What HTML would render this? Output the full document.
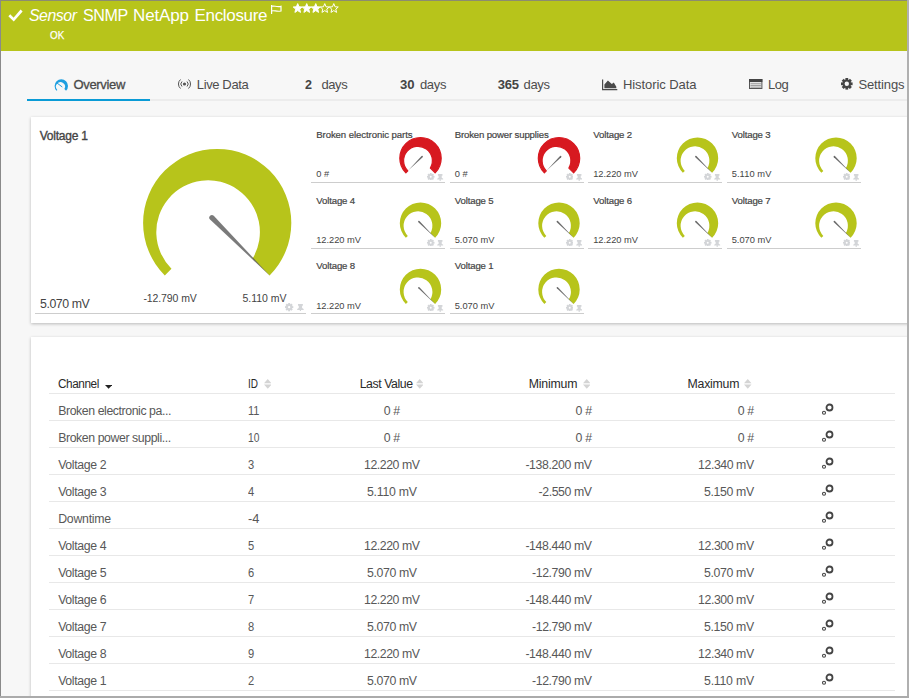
<!DOCTYPE html>
<html><head><meta charset="utf-8"><title>Sensor</title>
<style>
html,body{margin:0;padding:0}
body{width:909px;height:698px;overflow:hidden;position:relative;background:#f7f7f7;font-family:"Liberation Sans",sans-serif;color:#4a4a4a}
.a{position:absolute;white-space:nowrap;line-height:1;display:block}
#hdr{position:absolute;left:0;top:0;width:909px;height:51px;background:#b7c41b}
.card{position:absolute;background:#fff;box-shadow:0 1px 3px rgba(0,0,0,.25)}
.ln{position:absolute;height:1px;background:#e8e8e8}
.gln{position:absolute;height:1px;background:#cdcdcd}
.m{-webkit-text-stroke:.35px currentColor}
</style></head><body>
<div id="hdr"></div>

<svg class="a" style="left:8px;top:9px" width="16" height="13" viewBox="0 0 16 13"><path d="M1.3 6.200L5.700 10.600L13.600 1.500" fill="none" stroke="#fff" stroke-width="2.700"/></svg>
<div class="a" style="transform:scaleX(0.959);transform-origin:0 0;left:29.3px;top:7px;font-size:16.5px;color:#fff;font-style:italic;letter-spacing:-0.45px">Sensor</div>
<div class="a" style="transform:scaleX(0.946);transform-origin:0 0;left:82.5px;top:7px;font-size:17px;color:#fff;;letter-spacing:-0.45px">SNMP</div>
<div class="a" style="left:133px;top:7px;font-size:17px;color:#fff;;letter-spacing:-0.141px">NetApp</div>
<div class="a" style="left:194.5px;top:7px;font-size:17px;color:#fff;;letter-spacing:-0.326px">Enclosure</div>
<div class="a" style="transform:scaleX(0.87);transform-origin:0 0;left:49.7px;top:30px;font-size:11.3px;color:#fff;-webkit-text-stroke:.25px #fff">OK</div>
<svg class="a" style="left:271px;top:5px" width="11" height="10" viewBox="0 0 11 10"><path d="M.6 0V9M.6 1.300C3 .3 5.500 2.300 10 1.300V6C5.500 7 3 5 .6 6" fill="none" stroke="#fff" stroke-width="1.2"/></svg>
<svg class="a" style="left:0;top:0" width="350" height="20"><path transform="translate(293.2 3.6)" d="M4.500 0L5.800 3.200L9 3.400L6.500 5.500L7.300 8.800L4.500 7L1.700 8.800L2.500 5.500L0 3.400L3.200 3.200Z" fill="#fff" stroke="#fff" stroke-width="1"/><path transform="translate(302.22 3.6)" d="M4.500 0L5.800 3.200L9 3.400L6.500 5.500L7.300 8.800L4.500 7L1.700 8.800L2.500 5.500L0 3.400L3.200 3.200Z" fill="#fff" stroke="#fff" stroke-width="1"/><path transform="translate(311.24 3.6)" d="M4.500 0L5.800 3.200L9 3.400L6.500 5.500L7.300 8.800L4.500 7L1.700 8.800L2.500 5.500L0 3.400L3.200 3.200Z" fill="#fff" stroke="#fff" stroke-width="1"/><path transform="translate(320.26 3.6)" d="M4.500 0L5.800 3.200L9 3.400L6.500 5.500L7.300 8.800L4.500 7L1.700 8.800L2.500 5.500L0 3.400L3.200 3.200Z" fill="none" stroke="#fff" stroke-width="1"/><path transform="translate(329.28 3.6)" d="M4.500 0L5.800 3.200L9 3.400L6.500 5.500L7.300 8.800L4.500 7L1.700 8.800L2.500 5.500L0 3.400L3.200 3.200Z" fill="none" stroke="#fff" stroke-width="1"/></svg>
<div class="a" style="left:73.4px;top:78px;font-size:13px;color:#4a4a4a;-webkit-text-stroke:.3px #4a4a4a;letter-spacing:-0.312px">Overview</div>
<div class="a" style="left:196.8px;top:78px;font-size:13px;color:#4d4d4d;;letter-spacing:-0.378px">Live Data</div>
<div class="a" style="transform:scaleX(0.968);transform-origin:0 0;left:305px;top:78px;font-size:13px;color:#444;font-weight:bold">2</div>
<div class="a" style="left:321.4px;top:78px;font-size:13px;color:#4d4d4d;;letter-spacing:-0.39px">days</div>
<div class="a" style="transform:scaleX(1.009);transform-origin:0 0;left:400px;top:78px;font-size:13px;color:#444;font-weight:bold">30</div>
<div class="a" style="left:420px;top:78px;font-size:13px;color:#4d4d4d;;letter-spacing:-0.356px">days</div>
<div class="a" style="left:497.7px;top:78px;font-size:13px;color:#444;font-weight:bold;letter-spacing:-0.152px">365</div>
<div class="a" style="left:523.6px;top:78px;font-size:13px;color:#4d4d4d;;letter-spacing:-0.356px">days</div>
<div class="a" style="left:623px;top:78px;font-size:13px;color:#4d4d4d;;letter-spacing:-0.077px">Historic Data</div>
<div class="a" style="left:767.9px;top:78px;font-size:13px;color:#4d4d4d;;letter-spacing:-0.45px">Log</div>
<div class="a" style="left:858.4px;top:78px;font-size:13px;color:#4d4d4d;;letter-spacing:-0.126px">Settings</div>
<div class="a" style="left:27px;top:99px;width:882px;height:2px;background:#ececec"></div>
<div class="a" style="left:27px;top:99px;width:123px;height:2px;background:#0a9bd6"></div>
<svg class="a" style="left:0;top:0" width="80" height="95"><path d="M56.562 90.638A6.7 6.7 0 1 1 66.038 90.638L64.38 88.98A4.5 4.5 0 1 0 57.318 89.882Z" fill="#1e9fe0"/><path d="M57 83L62.300 87" stroke="#1e9fe0" stroke-width="1"/></svg>
<svg class="a" style="left:177px;top:78px" width="15" height="12" viewBox="0 0 15 12"><g fill="none" stroke="#555" stroke-width="1"><path d="M5 3.500A3.500 3.500 0 0 0 5 8.500M10 3.500A3.500 3.500 0 0 1 10 8.500M3.500 1.500A6 6 0 0 0 3.500 10.500M11.500 1.500A6 6 0 0 1 11.500 10.500"/></g><circle cx="7.500" cy="6" r="1.600" fill="#555"/></svg>
<svg class="a" style="left:602px;top:78.500px" width="16" height="12" viewBox="0 0 16 12"><path d="M.6 .4V10.700H15.300" fill="none" stroke="#4a4a4a" stroke-width="1.200"/><path d="M2.400 9.300V5.400L5.900 1.400L9.800 4.900L11.800 3.400L14.300 7.800V9.300Z" fill="#4a4a4a"/></svg>
<svg class="a" style="left:749.400px;top:78.900px" width="13.400" height="10" viewBox="0 0 13.400 10"><rect x=".5" y=".5" width="12.400" height="9" fill="#e4e4e4" stroke="#555" stroke-width="1"/><rect x="0" y="0" width="13.400" height="3" fill="#444"/><path d="M1.500 4.700H11.900M1.500 6.500H11.900M1.500 8.200H11.900" stroke="#999" stroke-width=".9"/></svg>
<svg class="a" style="left:841px;top:78.3px" width="11.6" height="11.6" viewBox="0 0 11.6 11.6"><g fill="#444"><rect x="4.408" y="0" width="2.784" height="11.6" transform="rotate(0 5.8 5.8)"/><rect x="4.408" y="0" width="2.784" height="11.6" transform="rotate(45 5.8 5.8)"/><rect x="4.408" y="0" width="2.784" height="11.6" transform="rotate(90 5.8 5.8)"/><rect x="4.408" y="0" width="2.784" height="11.6" transform="rotate(135 5.8 5.8)"/><circle cx="5.8" cy="5.8" r="4.292"/></g><circle cx="5.8" cy="5.8" r="2.204" fill="#f7f7f7"/></svg>
<div class="card" style="left:31px;top:117px;width:890px;height:206px"></div>
<div class="a" style="left:39.7px;top:130px;font-size:12px;color:#444;-webkit-text-stroke:.35px #444;letter-spacing:-0.218px">Voltage 1</div>
<div class="a" style="transform:scaleX(0.987);transform-origin:0 0;left:40px;top:298px;font-size:12.5px;color:#444;;letter-spacing:-0.45px">5.070 mV</div>
<div class="a" style="left:143.4px;top:293px;font-size:10.5px;color:#444;;letter-spacing:-0.098px">-12.790 mV</div>
<div class="a" style="left:242.4px;top:293px;font-size:10.5px;color:#444;;letter-spacing:0px">5.110 mV</div>
<div class="gln" style="left:35px;top:313px;width:271px"></div>
<svg class="a" style="left:285.4px;top:303.3px" width="8.3" height="8.3" viewBox="0 0 8.3 8.3"><g fill="#d3d5d8"><rect x="3.154" y="0" width="1.992" height="8.3" transform="rotate(0 4.15 4.15)"/><rect x="3.154" y="0" width="1.992" height="8.3" transform="rotate(45 4.15 4.15)"/><rect x="3.154" y="0" width="1.992" height="8.3" transform="rotate(90 4.15 4.15)"/><rect x="3.154" y="0" width="1.992" height="8.3" transform="rotate(135 4.15 4.15)"/><circle cx="4.15" cy="4.15" r="3.071"/></g><circle cx="4.15" cy="4.15" r="1.162" fill="#fff"/></svg>
<svg class="a" style="left:297.3px;top:303.5px" width="6.86" height="7.84" viewBox="0 0 7 8"><path d="M1 0H6V1.900H5.200V4L6.800 5.200V6.100H4.100V8H2.900V6.100H.2V5.200L1.800 4V1.900H1Z" fill="#d3d5d8"/></svg>
<svg class="a" style="left:0;top:0" width="909" height="340"><path d="M164.803 275.397A74.1 74.1 0 1 1 269.597 275.397L252.68 258.48A51.8 51.8 0 1 0 171.472 268.728Z" fill="#b7c41b"/><path d="M210.058 219.535L270.374 276.174L213.735 215.858A2.6 2.6 0 0 0 210.058 219.535Z" fill="rgba(80,80,80,.76)"/>
<path d="M405.863 172.837A20.7 20.7 0 1 1 435.137 172.837L430.371 168.071A14.4 14.4 0 1 0 407.818 170.882Z" fill="#d71920" stroke="#d71920" stroke-width="1.2" stroke-linejoin="round"/>
<path d="M421.561 156.008L408.126 170.574L422.692 157.139A0.8 0.8 0 0 0 421.561 156.008Z" fill="rgba(70,70,70,.8)"/>
<path d="M544.363 172.837A20.7 20.7 0 1 1 573.637 172.837L568.871 168.071A14.4 14.4 0 1 0 546.318 170.882Z" fill="#d71920" stroke="#d71920" stroke-width="1.2" stroke-linejoin="round"/>
<path d="M560.061 156.008L546.626 170.574L561.192 157.139A0.8 0.8 0 0 0 560.061 156.008Z" fill="rgba(70,70,70,.8)"/>
<path d="M682.863 172.837A20.7 20.7 0 1 1 712.137 172.837L707.371 168.071A14.4 14.4 0 1 0 684.818 170.882Z" fill="#b7c41b"/>
<path d="M695.308 157.139L712.349 173.049L696.439 156.008A0.8 0.8 0 0 0 695.308 157.139Z" fill="rgba(70,70,70,.8)"/>
<path d="M821.363 172.837A20.7 20.7 0 1 1 850.637 172.837L845.871 168.071A14.4 14.4 0 1 0 823.318 170.882Z" fill="#b7c41b"/>
<path d="M833.808 157.139L850.849 173.049L834.939 156.008A0.8 0.8 0 0 0 833.808 157.139Z" fill="rgba(70,70,70,.8)"/>
<path d="M405.863 237.837A20.7 20.7 0 1 1 435.137 237.837L430.371 233.071A14.4 14.4 0 1 0 407.818 235.882Z" fill="#b7c41b"/>
<path d="M418.308 222.139L435.349 238.049L419.439 221.008A0.8 0.8 0 0 0 418.308 222.139Z" fill="rgba(70,70,70,.8)"/>
<path d="M544.363 237.837A20.7 20.7 0 1 1 573.637 237.837L568.871 233.071A14.4 14.4 0 1 0 546.318 235.882Z" fill="#b7c41b"/>
<path d="M556.808 222.139L573.849 238.049L557.939 221.008A0.8 0.8 0 0 0 556.808 222.139Z" fill="rgba(70,70,70,.8)"/>
<path d="M682.863 237.837A20.7 20.7 0 1 1 712.137 237.837L707.371 233.071A14.4 14.4 0 1 0 684.818 235.882Z" fill="#b7c41b"/>
<path d="M695.308 222.139L712.349 238.049L696.439 221.008A0.8 0.8 0 0 0 695.308 222.139Z" fill="rgba(70,70,70,.8)"/>
<path d="M821.363 237.837A20.7 20.7 0 1 1 850.637 237.837L845.871 233.071A14.4 14.4 0 1 0 823.318 235.882Z" fill="#b7c41b"/>
<path d="M833.808 222.139L850.849 238.049L834.939 221.008A0.8 0.8 0 0 0 833.808 222.139Z" fill="rgba(70,70,70,.8)"/>
<path d="M405.863 304.037A20.7 20.7 0 1 1 435.137 304.037L430.371 299.271A14.4 14.4 0 1 0 407.818 302.082Z" fill="#b7c41b"/>
<path d="M418.308 288.339L435.349 304.249L419.439 287.208A0.8 0.8 0 0 0 418.308 288.339Z" fill="rgba(70,70,70,.8)"/>
<path d="M544.363 304.037A20.7 20.7 0 1 1 573.637 304.037L568.871 299.271A14.4 14.4 0 1 0 546.318 302.082Z" fill="#b7c41b"/>
<path d="M556.808 288.339L573.849 304.249L557.939 287.208A0.8 0.8 0 0 0 556.808 288.339Z" fill="rgba(70,70,70,.8)"/>
</svg>
<div class="a" style="left:316.2px;top:130px;font-size:9.6px;color:#444;-webkit-text-stroke:.2px #444;letter-spacing:-0.078px">Broken electronic parts</div>
<div class="a" style="left:316.2px;top:170px;font-size:9.3px;color:#444;;letter-spacing:0.081px">0 #</div>
<div class="gln" style="left:311.2px;top:182px;width:134px"></div>
<svg class="a" style="left:427.1px;top:172.9px" width="7.5" height="7.5" viewBox="0 0 7.5 7.5"><g fill="#d3d5d8"><rect x="2.85" y="0" width="1.8" height="7.5" transform="rotate(0 3.75 3.75)"/><rect x="2.85" y="0" width="1.8" height="7.5" transform="rotate(45 3.75 3.75)"/><rect x="2.85" y="0" width="1.8" height="7.5" transform="rotate(90 3.75 3.75)"/><rect x="2.85" y="0" width="1.8" height="7.5" transform="rotate(135 3.75 3.75)"/><circle cx="3.75" cy="3.75" r="2.775"/></g><circle cx="3.75" cy="3.75" r="0.975" fill="#fff"/></svg>
<svg class="a" style="left:437.4px;top:173.6px" width="6.37" height="7.28" viewBox="0 0 7 8"><path d="M1 0H6V1.900H5.200V4L6.800 5.200V6.100H4.100V8H2.900V6.100H.2V5.200L1.800 4V1.900H1Z" fill="#d3d5d8"/></svg>
<div class="a" style="left:454.7px;top:130px;font-size:9.6px;color:#444;-webkit-text-stroke:.2px #444;letter-spacing:-0.153px">Broken power supplies</div>
<div class="a" style="left:454.7px;top:170px;font-size:9.3px;color:#444;;letter-spacing:0.081px">0 #</div>
<div class="gln" style="left:449.7px;top:182px;width:134px"></div>
<svg class="a" style="left:565.6px;top:172.9px" width="7.5" height="7.5" viewBox="0 0 7.5 7.5"><g fill="#d3d5d8"><rect x="2.85" y="0" width="1.8" height="7.5" transform="rotate(0 3.75 3.75)"/><rect x="2.85" y="0" width="1.8" height="7.5" transform="rotate(45 3.75 3.75)"/><rect x="2.85" y="0" width="1.8" height="7.5" transform="rotate(90 3.75 3.75)"/><rect x="2.85" y="0" width="1.8" height="7.5" transform="rotate(135 3.75 3.75)"/><circle cx="3.75" cy="3.75" r="2.775"/></g><circle cx="3.75" cy="3.75" r="0.975" fill="#fff"/></svg>
<svg class="a" style="left:575.9px;top:173.6px" width="6.37" height="7.28" viewBox="0 0 7 8"><path d="M1 0H6V1.900H5.200V4L6.800 5.200V6.100H4.100V8H2.900V6.100H.2V5.200L1.800 4V1.900H1Z" fill="#d3d5d8"/></svg>
<div class="a" style="left:593.2px;top:130px;font-size:9.6px;color:#444;-webkit-text-stroke:.2px #444;letter-spacing:-0.127px">Voltage 2</div>
<div class="a" style="left:593.2px;top:170px;font-size:9.3px;color:#444;;letter-spacing:-0.021px">12.220 mV</div>
<div class="gln" style="left:588.2px;top:182px;width:134px"></div>
<svg class="a" style="left:704.1px;top:172.9px" width="7.5" height="7.5" viewBox="0 0 7.5 7.5"><g fill="#d3d5d8"><rect x="2.85" y="0" width="1.8" height="7.5" transform="rotate(0 3.75 3.75)"/><rect x="2.85" y="0" width="1.8" height="7.5" transform="rotate(45 3.75 3.75)"/><rect x="2.85" y="0" width="1.8" height="7.5" transform="rotate(90 3.75 3.75)"/><rect x="2.85" y="0" width="1.8" height="7.5" transform="rotate(135 3.75 3.75)"/><circle cx="3.75" cy="3.75" r="2.775"/></g><circle cx="3.75" cy="3.75" r="0.975" fill="#fff"/></svg>
<svg class="a" style="left:714.4px;top:173.6px" width="6.37" height="7.28" viewBox="0 0 7 8"><path d="M1 0H6V1.900H5.200V4L6.800 5.200V6.100H4.100V8H2.900V6.100H.2V5.200L1.800 4V1.900H1Z" fill="#d3d5d8"/></svg>
<div class="a" style="left:731.7px;top:130px;font-size:9.6px;color:#444;-webkit-text-stroke:.2px #444;letter-spacing:-0.127px">Voltage 3</div>
<div class="a" style="left:731.7px;top:170px;font-size:9.3px;color:#444;;letter-spacing:0.084px">5.110 mV</div>
<div class="gln" style="left:726.7px;top:182px;width:134px"></div>
<svg class="a" style="left:842.6px;top:172.9px" width="7.5" height="7.5" viewBox="0 0 7.5 7.5"><g fill="#d3d5d8"><rect x="2.85" y="0" width="1.8" height="7.5" transform="rotate(0 3.75 3.75)"/><rect x="2.85" y="0" width="1.8" height="7.5" transform="rotate(45 3.75 3.75)"/><rect x="2.85" y="0" width="1.8" height="7.5" transform="rotate(90 3.75 3.75)"/><rect x="2.85" y="0" width="1.8" height="7.5" transform="rotate(135 3.75 3.75)"/><circle cx="3.75" cy="3.75" r="2.775"/></g><circle cx="3.75" cy="3.75" r="0.975" fill="#fff"/></svg>
<svg class="a" style="left:852.9px;top:173.6px" width="6.37" height="7.28" viewBox="0 0 7 8"><path d="M1 0H6V1.900H5.200V4L6.800 5.200V6.100H4.100V8H2.900V6.100H.2V5.200L1.800 4V1.900H1Z" fill="#d3d5d8"/></svg>
<div class="a" style="left:316.2px;top:196px;font-size:9.6px;color:#444;-webkit-text-stroke:.2px #444;letter-spacing:-0.127px">Voltage 4</div>
<div class="a" style="left:316.2px;top:236px;font-size:9.3px;color:#444;;letter-spacing:-0.021px">12.220 mV</div>
<div class="gln" style="left:311.2px;top:248px;width:134px"></div>
<svg class="a" style="left:427.1px;top:238.9px" width="7.5" height="7.5" viewBox="0 0 7.5 7.5"><g fill="#d3d5d8"><rect x="2.85" y="0" width="1.8" height="7.5" transform="rotate(0 3.75 3.75)"/><rect x="2.85" y="0" width="1.8" height="7.5" transform="rotate(45 3.75 3.75)"/><rect x="2.85" y="0" width="1.8" height="7.5" transform="rotate(90 3.75 3.75)"/><rect x="2.85" y="0" width="1.8" height="7.5" transform="rotate(135 3.75 3.75)"/><circle cx="3.75" cy="3.75" r="2.775"/></g><circle cx="3.75" cy="3.75" r="0.975" fill="#fff"/></svg>
<svg class="a" style="left:437.4px;top:239.6px" width="6.37" height="7.28" viewBox="0 0 7 8"><path d="M1 0H6V1.900H5.200V4L6.800 5.200V6.100H4.100V8H2.900V6.100H.2V5.200L1.800 4V1.900H1Z" fill="#d3d5d8"/></svg>
<div class="a" style="left:454.7px;top:196px;font-size:9.6px;color:#444;-webkit-text-stroke:.2px #444;letter-spacing:-0.127px">Voltage 5</div>
<div class="a" style="left:454.7px;top:236px;font-size:9.3px;color:#444;;letter-spacing:-0.014px">5.070 mV</div>
<div class="gln" style="left:449.7px;top:248px;width:134px"></div>
<svg class="a" style="left:565.6px;top:238.9px" width="7.5" height="7.5" viewBox="0 0 7.5 7.5"><g fill="#d3d5d8"><rect x="2.85" y="0" width="1.8" height="7.5" transform="rotate(0 3.75 3.75)"/><rect x="2.85" y="0" width="1.8" height="7.5" transform="rotate(45 3.75 3.75)"/><rect x="2.85" y="0" width="1.8" height="7.5" transform="rotate(90 3.75 3.75)"/><rect x="2.85" y="0" width="1.8" height="7.5" transform="rotate(135 3.75 3.75)"/><circle cx="3.75" cy="3.75" r="2.775"/></g><circle cx="3.75" cy="3.75" r="0.975" fill="#fff"/></svg>
<svg class="a" style="left:575.9px;top:239.6px" width="6.37" height="7.28" viewBox="0 0 7 8"><path d="M1 0H6V1.900H5.200V4L6.800 5.200V6.100H4.100V8H2.900V6.100H.2V5.200L1.800 4V1.900H1Z" fill="#d3d5d8"/></svg>
<div class="a" style="left:593.2px;top:196px;font-size:9.6px;color:#444;-webkit-text-stroke:.2px #444;letter-spacing:-0.127px">Voltage 6</div>
<div class="a" style="left:593.2px;top:236px;font-size:9.3px;color:#444;;letter-spacing:-0.021px">12.220 mV</div>
<div class="gln" style="left:588.2px;top:248px;width:134px"></div>
<svg class="a" style="left:704.1px;top:238.9px" width="7.5" height="7.5" viewBox="0 0 7.5 7.5"><g fill="#d3d5d8"><rect x="2.85" y="0" width="1.8" height="7.5" transform="rotate(0 3.75 3.75)"/><rect x="2.85" y="0" width="1.8" height="7.5" transform="rotate(45 3.75 3.75)"/><rect x="2.85" y="0" width="1.8" height="7.5" transform="rotate(90 3.75 3.75)"/><rect x="2.85" y="0" width="1.8" height="7.5" transform="rotate(135 3.75 3.75)"/><circle cx="3.75" cy="3.75" r="2.775"/></g><circle cx="3.75" cy="3.75" r="0.975" fill="#fff"/></svg>
<svg class="a" style="left:714.4px;top:239.6px" width="6.37" height="7.28" viewBox="0 0 7 8"><path d="M1 0H6V1.900H5.200V4L6.800 5.200V6.100H4.100V8H2.900V6.100H.2V5.200L1.800 4V1.900H1Z" fill="#d3d5d8"/></svg>
<div class="a" style="left:731.7px;top:196px;font-size:9.6px;color:#444;-webkit-text-stroke:.2px #444;letter-spacing:-0.127px">Voltage 7</div>
<div class="a" style="left:731.7px;top:236px;font-size:9.3px;color:#444;;letter-spacing:-0.014px">5.070 mV</div>
<div class="gln" style="left:726.7px;top:248px;width:134px"></div>
<svg class="a" style="left:842.6px;top:238.9px" width="7.5" height="7.5" viewBox="0 0 7.5 7.5"><g fill="#d3d5d8"><rect x="2.85" y="0" width="1.8" height="7.5" transform="rotate(0 3.75 3.75)"/><rect x="2.85" y="0" width="1.8" height="7.5" transform="rotate(45 3.75 3.75)"/><rect x="2.85" y="0" width="1.8" height="7.5" transform="rotate(90 3.75 3.75)"/><rect x="2.85" y="0" width="1.8" height="7.5" transform="rotate(135 3.75 3.75)"/><circle cx="3.75" cy="3.75" r="2.775"/></g><circle cx="3.75" cy="3.75" r="0.975" fill="#fff"/></svg>
<svg class="a" style="left:852.9px;top:239.6px" width="6.37" height="7.28" viewBox="0 0 7 8"><path d="M1 0H6V1.900H5.200V4L6.800 5.200V6.100H4.100V8H2.900V6.100H.2V5.200L1.800 4V1.900H1Z" fill="#d3d5d8"/></svg>
<div class="a" style="left:316.2px;top:261px;font-size:9.6px;color:#444;-webkit-text-stroke:.2px #444;letter-spacing:-0.127px">Voltage 8</div>
<div class="a" style="left:316.2px;top:302px;font-size:9.3px;color:#444;;letter-spacing:-0.021px">12.220 mV</div>
<div class="gln" style="left:311.2px;top:313px;width:134px"></div>
<svg class="a" style="left:427.1px;top:303.9px" width="7.5" height="7.5" viewBox="0 0 7.5 7.5"><g fill="#d3d5d8"><rect x="2.85" y="0" width="1.8" height="7.5" transform="rotate(0 3.75 3.75)"/><rect x="2.85" y="0" width="1.8" height="7.5" transform="rotate(45 3.75 3.75)"/><rect x="2.85" y="0" width="1.8" height="7.5" transform="rotate(90 3.75 3.75)"/><rect x="2.85" y="0" width="1.8" height="7.5" transform="rotate(135 3.75 3.75)"/><circle cx="3.75" cy="3.75" r="2.775"/></g><circle cx="3.75" cy="3.75" r="0.975" fill="#fff"/></svg>
<svg class="a" style="left:437.4px;top:304.6px" width="6.37" height="7.28" viewBox="0 0 7 8"><path d="M1 0H6V1.900H5.200V4L6.800 5.200V6.100H4.100V8H2.900V6.100H.2V5.200L1.800 4V1.900H1Z" fill="#d3d5d8"/></svg>
<div class="a" style="left:454.7px;top:261px;font-size:9.6px;color:#444;-webkit-text-stroke:.2px #444;letter-spacing:-0.127px">Voltage 1</div>
<div class="a" style="left:454.7px;top:302px;font-size:9.3px;color:#444;;letter-spacing:-0.014px">5.070 mV</div>
<div class="gln" style="left:449.7px;top:313px;width:134px"></div>
<svg class="a" style="left:565.6px;top:303.9px" width="7.5" height="7.5" viewBox="0 0 7.5 7.5"><g fill="#d3d5d8"><rect x="2.85" y="0" width="1.8" height="7.5" transform="rotate(0 3.75 3.75)"/><rect x="2.85" y="0" width="1.8" height="7.5" transform="rotate(45 3.75 3.75)"/><rect x="2.85" y="0" width="1.8" height="7.5" transform="rotate(90 3.75 3.75)"/><rect x="2.85" y="0" width="1.8" height="7.5" transform="rotate(135 3.75 3.75)"/><circle cx="3.75" cy="3.75" r="2.775"/></g><circle cx="3.75" cy="3.75" r="0.975" fill="#fff"/></svg>
<svg class="a" style="left:575.9px;top:304.6px" width="6.37" height="7.28" viewBox="0 0 7 8"><path d="M1 0H6V1.900H5.200V4L6.800 5.200V6.100H4.100V8H2.900V6.100H.2V5.200L1.800 4V1.900H1Z" fill="#d3d5d8"/></svg>
<div class="card" style="left:31px;top:337px;width:890px;height:380px"></div>
<div class="a" style="transform:scaleX(0.958);transform-origin:0 0;left:58.2px;top:378px;font-size:12.3px;color:#2a2a2a;;letter-spacing:-0.45px">Channel</div>
<div class="a" style="transform:scaleX(0.812);transform-origin:0 0;left:248.4px;top:378px;font-size:12.3px;color:#2a2a2a;">ID</div>
<div class="a" style="left:359.7px;top:378px;font-size:12.3px;color:#2a2a2a;;letter-spacing:-0.423px">Last Value</div>
<div class="a" style="left:528.8px;top:378px;font-size:12.3px;color:#2a2a2a;;letter-spacing:-0.212px">Minimum</div>
<div class="a" style="left:687.6px;top:378px;font-size:12.3px;color:#2a2a2a;;letter-spacing:-0.249px">Maximum</div>
<div class="ln" style="left:49px;top:393px;width:846px"></div>
<div class="ln" style="left:49px;top:420px;width:846px"></div>
<div class="ln" style="left:49px;top:447px;width:846px"></div>
<div class="ln" style="left:49px;top:474px;width:846px"></div>
<div class="ln" style="left:49px;top:501px;width:846px"></div>
<div class="ln" style="left:49px;top:528px;width:846px"></div>
<div class="ln" style="left:49px;top:555px;width:846px"></div>
<div class="ln" style="left:49px;top:582px;width:846px"></div>
<div class="ln" style="left:49px;top:609px;width:846px"></div>
<div class="ln" style="left:49px;top:636px;width:846px"></div>
<div class="ln" style="left:49px;top:663px;width:846px"></div>
<div class="ln" style="left:49px;top:690px;width:846px"></div>
<div class="a" style="left:58.2px;top:405px;font-size:12.3px;color:#585858;;letter-spacing:-0.416px">Broken electronic pa...</div>
<div class="a" style="transform:scaleX(0.893);transform-origin:0 0;left:248.4px;top:405px;font-size:12.3px;color:#585858;">11</div>
<div class="a" style="left:383.8px;top:405px;font-size:12.3px;color:#585858;;letter-spacing:-0.355px">0 #</div>
<div class="a" style="left:575.6px;top:405px;font-size:12.3px;color:#585858;;letter-spacing:-0.355px">0 #</div>
<div class="a" style="left:737.7px;top:405px;font-size:12.3px;color:#585858;;letter-spacing:-0.355px">0 #</div>
<svg class="a" style="left:821px;top:403.3px" width="14" height="14" viewBox="0 0 14 14"><circle cx="8.500" cy="4.500" r="3" fill="none" stroke="#444" stroke-width="1.800"/><circle cx="3" cy="9.800" r="1.500" fill="none" stroke="#444" stroke-width="1.100"/></svg>
<div class="a" style="left:58.2px;top:432px;font-size:12.3px;color:#585858;;letter-spacing:-0.413px">Broken power suppli...</div>
<div class="a" style="transform:scaleX(0.833);transform-origin:0 0;left:248.4px;top:432px;font-size:12.3px;color:#585858;">10</div>
<div class="a" style="left:383.8px;top:432px;font-size:12.3px;color:#585858;;letter-spacing:-0.355px">0 #</div>
<div class="a" style="left:575.6px;top:432px;font-size:12.3px;color:#585858;;letter-spacing:-0.355px">0 #</div>
<div class="a" style="left:737.7px;top:432px;font-size:12.3px;color:#585858;;letter-spacing:-0.355px">0 #</div>
<svg class="a" style="left:821px;top:430.3px" width="14" height="14" viewBox="0 0 14 14"><circle cx="8.500" cy="4.500" r="3" fill="none" stroke="#444" stroke-width="1.800"/><circle cx="3" cy="9.800" r="1.500" fill="none" stroke="#444" stroke-width="1.100"/></svg>
<div class="a" style="left:58.2px;top:459px;font-size:12.3px;color:#585858;;letter-spacing:-0.375px">Voltage 2</div>
<div class="a" style="transform:scaleX(0.906);transform-origin:0 0;left:248.4px;top:459px;font-size:12.3px;color:#585858;">3</div>
<div class="a" style="left:364px;top:459px;font-size:12.3px;color:#585858;;letter-spacing:-0.436px">12.220 mV</div>
<div class="a" style="left:525.4px;top:459px;font-size:12.3px;color:#585858;;letter-spacing:-0.382px">-138.200 mV</div>
<div class="a" style="left:698.1px;top:459px;font-size:12.3px;color:#585858;;letter-spacing:-0.436px">12.340 mV</div>
<svg class="a" style="left:821px;top:457.3px" width="14" height="14" viewBox="0 0 14 14"><circle cx="8.500" cy="4.500" r="3" fill="none" stroke="#444" stroke-width="1.800"/><circle cx="3" cy="9.800" r="1.500" fill="none" stroke="#444" stroke-width="1.100"/></svg>
<div class="a" style="left:58.2px;top:486px;font-size:12.3px;color:#585858;;letter-spacing:-0.375px">Voltage 3</div>
<div class="a" style="transform:scaleX(0.906);transform-origin:0 0;left:248.4px;top:486px;font-size:12.3px;color:#585858;">4</div>
<div class="a" style="left:367px;top:486px;font-size:12.3px;color:#585858;;letter-spacing:-0.248px">5.110 mV</div>
<div class="a" style="left:538.5px;top:486px;font-size:12.3px;color:#585858;;letter-spacing:-0.404px">-2.550 mV</div>
<div class="a" style="left:704.1px;top:486px;font-size:12.3px;color:#585858;;letter-spacing:-0.377px">5.150 mV</div>
<svg class="a" style="left:821px;top:484.3px" width="14" height="14" viewBox="0 0 14 14"><circle cx="8.500" cy="4.500" r="3" fill="none" stroke="#444" stroke-width="1.800"/><circle cx="3" cy="9.800" r="1.500" fill="none" stroke="#444" stroke-width="1.100"/></svg>
<div class="a" style="left:58.2px;top:513px;font-size:12.3px;color:#585858;;letter-spacing:-0.239px">Downtime</div>
<div class="a" style="transform:scaleX(1.042);transform-origin:0 0;left:248.4px;top:513px;font-size:12.3px;color:#585858;">-4</div>
<svg class="a" style="left:821px;top:511.3px" width="14" height="14" viewBox="0 0 14 14"><circle cx="8.500" cy="4.500" r="3" fill="none" stroke="#444" stroke-width="1.800"/><circle cx="3" cy="9.800" r="1.500" fill="none" stroke="#444" stroke-width="1.100"/></svg>
<div class="a" style="left:58.2px;top:540px;font-size:12.3px;color:#585858;;letter-spacing:-0.375px">Voltage 4</div>
<div class="a" style="transform:scaleX(0.906);transform-origin:0 0;left:248.4px;top:540px;font-size:12.3px;color:#585858;">5</div>
<div class="a" style="left:364px;top:540px;font-size:12.3px;color:#585858;;letter-spacing:-0.436px">12.220 mV</div>
<div class="a" style="left:525.4px;top:540px;font-size:12.3px;color:#585858;;letter-spacing:-0.382px">-148.440 mV</div>
<div class="a" style="left:698.1px;top:540px;font-size:12.3px;color:#585858;;letter-spacing:-0.436px">12.300 mV</div>
<svg class="a" style="left:821px;top:538.3px" width="14" height="14" viewBox="0 0 14 14"><circle cx="8.500" cy="4.500" r="3" fill="none" stroke="#444" stroke-width="1.800"/><circle cx="3" cy="9.800" r="1.500" fill="none" stroke="#444" stroke-width="1.100"/></svg>
<div class="a" style="left:58.2px;top:567px;font-size:12.3px;color:#585858;;letter-spacing:-0.375px">Voltage 5</div>
<div class="a" style="transform:scaleX(0.906);transform-origin:0 0;left:248.4px;top:567px;font-size:12.3px;color:#585858;">6</div>
<div class="a" style="left:367px;top:567px;font-size:12.3px;color:#585858;;letter-spacing:-0.377px">5.070 mV</div>
<div class="a" style="left:532px;top:567px;font-size:12.3px;color:#585858;;letter-spacing:-0.398px">-12.790 mV</div>
<div class="a" style="left:704.1px;top:567px;font-size:12.3px;color:#585858;;letter-spacing:-0.377px">5.070 mV</div>
<svg class="a" style="left:821px;top:565.3px" width="14" height="14" viewBox="0 0 14 14"><circle cx="8.500" cy="4.500" r="3" fill="none" stroke="#444" stroke-width="1.800"/><circle cx="3" cy="9.800" r="1.500" fill="none" stroke="#444" stroke-width="1.100"/></svg>
<div class="a" style="left:58.2px;top:594px;font-size:12.3px;color:#585858;;letter-spacing:-0.375px">Voltage 6</div>
<div class="a" style="transform:scaleX(0.906);transform-origin:0 0;left:248.4px;top:594px;font-size:12.3px;color:#585858;">7</div>
<div class="a" style="left:364px;top:594px;font-size:12.3px;color:#585858;;letter-spacing:-0.436px">12.220 mV</div>
<div class="a" style="left:525.4px;top:594px;font-size:12.3px;color:#585858;;letter-spacing:-0.382px">-148.440 mV</div>
<div class="a" style="left:698.1px;top:594px;font-size:12.3px;color:#585858;;letter-spacing:-0.436px">12.300 mV</div>
<svg class="a" style="left:821px;top:592.3px" width="14" height="14" viewBox="0 0 14 14"><circle cx="8.500" cy="4.500" r="3" fill="none" stroke="#444" stroke-width="1.800"/><circle cx="3" cy="9.800" r="1.500" fill="none" stroke="#444" stroke-width="1.100"/></svg>
<div class="a" style="left:58.2px;top:621px;font-size:12.3px;color:#585858;;letter-spacing:-0.375px">Voltage 7</div>
<div class="a" style="transform:scaleX(0.906);transform-origin:0 0;left:248.4px;top:621px;font-size:12.3px;color:#585858;">8</div>
<div class="a" style="left:367px;top:621px;font-size:12.3px;color:#585858;;letter-spacing:-0.377px">5.070 mV</div>
<div class="a" style="left:532px;top:621px;font-size:12.3px;color:#585858;;letter-spacing:-0.398px">-12.790 mV</div>
<div class="a" style="left:704.1px;top:621px;font-size:12.3px;color:#585858;;letter-spacing:-0.377px">5.150 mV</div>
<svg class="a" style="left:821px;top:619.3px" width="14" height="14" viewBox="0 0 14 14"><circle cx="8.500" cy="4.500" r="3" fill="none" stroke="#444" stroke-width="1.800"/><circle cx="3" cy="9.800" r="1.500" fill="none" stroke="#444" stroke-width="1.100"/></svg>
<div class="a" style="left:58.2px;top:648px;font-size:12.3px;color:#585858;;letter-spacing:-0.375px">Voltage 8</div>
<div class="a" style="transform:scaleX(0.906);transform-origin:0 0;left:248.4px;top:648px;font-size:12.3px;color:#585858;">9</div>
<div class="a" style="left:364px;top:648px;font-size:12.3px;color:#585858;;letter-spacing:-0.436px">12.220 mV</div>
<div class="a" style="left:525.4px;top:648px;font-size:12.3px;color:#585858;;letter-spacing:-0.382px">-148.440 mV</div>
<div class="a" style="left:698.1px;top:648px;font-size:12.3px;color:#585858;;letter-spacing:-0.436px">12.340 mV</div>
<svg class="a" style="left:821px;top:646.3px" width="14" height="14" viewBox="0 0 14 14"><circle cx="8.500" cy="4.500" r="3" fill="none" stroke="#444" stroke-width="1.800"/><circle cx="3" cy="9.800" r="1.500" fill="none" stroke="#444" stroke-width="1.100"/></svg>
<div class="a" style="left:58.2px;top:675px;font-size:12.3px;color:#585858;;letter-spacing:-0.375px">Voltage 1</div>
<div class="a" style="transform:scaleX(0.906);transform-origin:0 0;left:248.4px;top:675px;font-size:12.3px;color:#585858;">2</div>
<div class="a" style="left:367px;top:675px;font-size:12.3px;color:#585858;;letter-spacing:-0.377px">5.070 mV</div>
<div class="a" style="left:532px;top:675px;font-size:12.3px;color:#585858;;letter-spacing:-0.398px">-12.790 mV</div>
<div class="a" style="left:704.1px;top:675px;font-size:12.3px;color:#585858;;letter-spacing:-0.248px">5.110 mV</div>
<svg class="a" style="left:821px;top:673.3px" width="14" height="14" viewBox="0 0 14 14"><circle cx="8.500" cy="4.500" r="3" fill="none" stroke="#444" stroke-width="1.800"/><circle cx="3" cy="9.800" r="1.500" fill="none" stroke="#444" stroke-width="1.100"/></svg>
<svg class="a" style="left:105.300px;top:384.500px" width="7.200" height="4"><path d="M0 0H7.200L3.600 3.800Z" fill="#222"/></svg>
<svg class="a" style="left:263.5px;top:379.200px" width="7.500" height="10" viewBox="0 0 7.500 10"><path d="M0 4.200L3.750 0L7.500 4.200ZM0 5.600L3.750 9.800L7.500 5.600Z" fill="#d4d4d4"/></svg>
<svg class="a" style="left:415.8px;top:379.200px" width="7.500" height="10" viewBox="0 0 7.500 10"><path d="M0 4.200L3.750 0L7.500 4.200ZM0 5.600L3.750 9.800L7.500 5.600Z" fill="#d4d4d4"/></svg>
<svg class="a" style="left:582.8px;top:379.200px" width="7.500" height="10" viewBox="0 0 7.500 10"><path d="M0 4.200L3.750 0L7.500 4.200ZM0 5.600L3.750 9.800L7.500 5.600Z" fill="#d4d4d4"/></svg>
<svg class="a" style="left:744.4px;top:379.200px" width="7.500" height="10" viewBox="0 0 7.500 10"><path d="M0 4.200L3.750 0L7.500 4.200ZM0 5.600L3.750 9.800L7.500 5.600Z" fill="#d4d4d4"/></svg>
<div class="a" style="left:0;top:0;width:909px;height:1px;background:#8c8c70"></div>
<div class="a" style="left:0;top:0;width:1px;height:698px;background:#8a8a8a"></div>
<div class="a" style="left:907px;top:0;width:2px;height:698px;background:#b0b0b0"></div>
<div class="a" style="left:0;top:696px;width:909px;height:2px;background:#ababab"></div>
</body></html>
